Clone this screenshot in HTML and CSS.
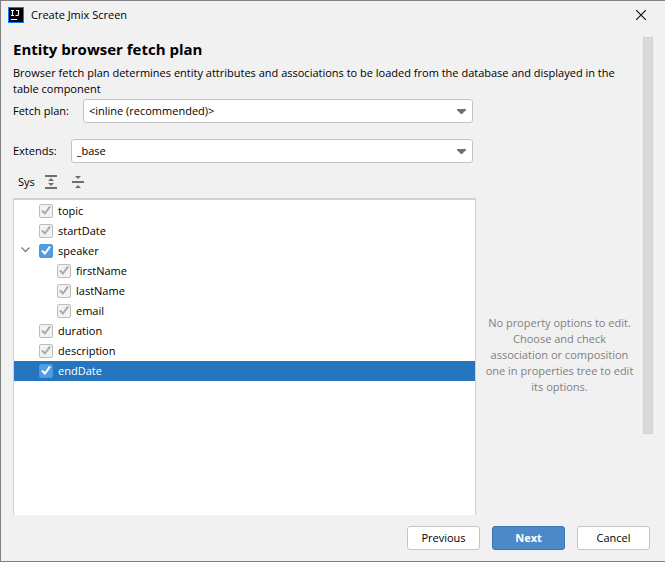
FILE: index.html
```html
<!DOCTYPE html>
<html lang="en">
<head>
<meta charset="utf-8">
<title>Create Jmix Screen</title>
<link rel="stylesheet" href="styles.css">
</head>
<body>
<svg class="defs" aria-hidden="true">
  <symbol id="arrow" viewBox="0 0 9 5"><path d="M0 0h9v1L5 5H4L0 1z" fill="#6e6e6e"/></symbol>
</svg>
<div class="dialog">
  <header class="titlebar">
    <svg class="logo" viewBox="0 0 16 16" aria-hidden="true">
      <path d="M0 0h16v16H0z" fill="#087cfa"/>
      <path d="M1 1h14v14H1z" fill="#000"/>
      <path d="M3 3.500h3M4.500 3.500v5M3 8.500h3M8 3.500h2.500v4q0 1-1 1H7.500M3 12.500h6" fill="none" stroke="#fff" stroke-width="1.200"/>
    </svg>
    <span class="caption">Create Jmix Screen</span>
    <button class="close" aria-label="Close"><svg viewBox="0 0 10 10"><path d="M0 0l10 10M10 0L0 10" stroke="#111" stroke-width="1.200"/></svg></button>
  </header>
  <main class="page">
    <div class="content">
      <h1>Entity browser fetch plan</h1>
      <p class="intro">Browser fetch plan determines entity attributes and associations to be loaded from the database and displayed in the table component</p>
      <div class="columns">
        <section class="settings">
          <div class="field">
            <label for="plan">Fetch plan:</label>
            <div class="combo"><select id="plan"><option>&lt;inline (recommended)&gt;</option></select><svg aria-hidden="true"><use href="#arrow"/></svg></div>
          </div>
          <div class="field">
            <label for="extends">Extends:</label>
            <div class="combo"><select id="extends"><option>_base</option></select><svg aria-hidden="true"><use href="#arrow"/></svg></div>
          </div>
          <div class="toolbar">
            <button>Sys</button>
            <button aria-label="Expand all"><svg viewBox="0 0 12 14"><path d="M0 0h12v2H0zM0 12h12v2H0zM3 6l3-3 3 3zM3 8h6l-3 3z" fill="#6e6e6e"/></svg></button>
            <button aria-label="Collapse all"><svg viewBox="0 0 12 14"><path d="M0 6h12v2H0zM3 1h6L6 4zM3 13l3-3 3 3z" fill="#6e6e6e"/></svg></button>
          </div>
          <ul class="tree">
            <li><label class="row"><input type="checkbox" checked disabled>topic</label></li>
            <li><label class="row"><input type="checkbox" checked disabled>startDate</label></li>
            <li class="branch">
              <button class="twisty" aria-label="Collapse speaker"><svg viewBox="0 0 9 6"><path d="M.5.5l4 4 4-4" fill="none" stroke="#7f7f7f" stroke-width="1.300"/></svg></button>
              <label class="row"><input type="checkbox" checked>speaker</label>
              <ul class="children">
                <li><label class="row"><input type="checkbox" checked disabled>firstName</label></li>
                <li><label class="row"><input type="checkbox" checked disabled>lastName</label></li>
                <li><label class="row"><input type="checkbox" checked disabled>email</label></li>
              </ul>
            </li>
            <li><label class="row"><input type="checkbox" checked disabled>duration</label></li>
            <li><label class="row"><input type="checkbox" checked disabled>description</label></li>
            <li class="selected"><label class="row"><input type="checkbox" checked>endDate</label></li>
          </ul>
        </section>
        <aside class="options">No property options to edit. Choose and check association or composition one in properties tree to edit its options.</aside>
      </div>
    </div>
    <div class="track"><div class="thumb"></div></div>
  </main>
  <footer class="actions">
    <button>Previous</button>
    <button class="primary">Next</button>
    <button>Cancel</button>
  </footer>
</div>
</body>
</html>
```
FILE: styles.css
```css
* { box-sizing: border-box; }
body, h1, p, ul { margin: 0; padding: 0; }
body, button, select { font: 11px/16px "Open Sans", "Noto Sans", sans-serif; color: #000; }
ul { list-style: none; }
button { padding: 0; border: 0; background: none; }
svg { display: block; }
.defs { position: absolute; width: 0; height: 0; }

.dialog {
  display: flex;
  flex-direction: column;
  min-height: 100vh;
  background: #f1f1f1;
  border: solid #808080;
  border-width: 1px 0 1px 1px;
}

.titlebar { display: flex; align-items: center; height: 36px; padding: 0 19px 8px 7px; }
.logo { width: 16px; height: 16px; }
.caption { flex: 1; padding-left: 7px; }
.close svg { width: 10px; height: 10px; }

.page { flex: 1; display: flex; padding: 0 12px; }
.content { flex: 1; display: flex; flex-direction: column; min-width: 0; }
h1 { font-size: 15px; line-height: 24px; }
.intro { padding: 4px 8px 0 0; }
.columns { flex: 1; display: flex; padding-top: 2px; }
.settings { flex: 1; display: flex; flex-direction: column; }
.field { display: flex; align-items: center; gap: 14px; margin: 0 3px 16px 0; }
.combo { flex: 1; display: grid; align-items: center; }
.combo select, .combo svg { grid-area: 1 / 1; }
.combo select {
  appearance: none;
  width: 100%;
  height: 24px;
  padding: 0 20px 0 5px;
  border: 1px solid #c4c4c4;
  border-radius: 3px;
  background: #fff;
}
.combo svg { width: 9px; height: 5px; margin-right: 7px; justify-self: end; pointer-events: none; }

.toolbar { display: flex; align-items: center; gap: 15px; height: 19px; padding-left: 5px; margin-top: -7px; margin-bottom: 7px; }
.toolbar button:first-child { margin-right: -5px; }
.toolbar svg { width: 12px; height: 14px; }

.tree { flex: 1; padding-top: 1px; background: #fff; border: solid #d1d1d1; border-width: 2px 1px 0; }
.row { display: flex; align-items: center; gap: 5px; height: 20px; padding-left: 25px; }
.children .row { padding-left: 43px; }
.branch { position: relative; }
.twisty { position: absolute; left: 7px; top: 6px; }
.twisty svg { width: 9px; height: 6px; }
.selected { background: #2675bf; color: #fff; }
.row input {
  appearance: none;
  display: grid;
  place-items: center;
  width: 14px;
  height: 14px;
  margin: 0;
  border: 1px solid #4b97e0;
  border-radius: 2px;
  background: #4f9ee3;
  color: #fff;
}
.row input:disabled { background: #f2f2f2; border-color: #bdbdbd; color: #ababab; }
.row input:checked::after {
  content: "";
  width: 10px;
  height: 10px;
  background: currentColor;
  clip-path: polygon(0 5px, 2px 4px, 4px 6px, 8px 0, 10px 1px, 4px 9px);
}

.options { flex: 0 0 167px; align-self: center; padding: 96px 8px 0; text-align: center; color: #808080; }
.track { width: 10px; }
.thumb { height: 83%; background: #d9d9d9; border: 1px solid #d1d1d1; }

.actions { display: flex; justify-content: flex-end; gap: 12px; padding: 11px 15px; }
.actions button { width: 73px; height: 24px; background: #fff; border: 1px solid #c4c4c4; border-radius: 3px; }
.actions .primary { background: #4c89c9; border-color: #3d75b2; color: #fff; font-weight: 700; }
```
